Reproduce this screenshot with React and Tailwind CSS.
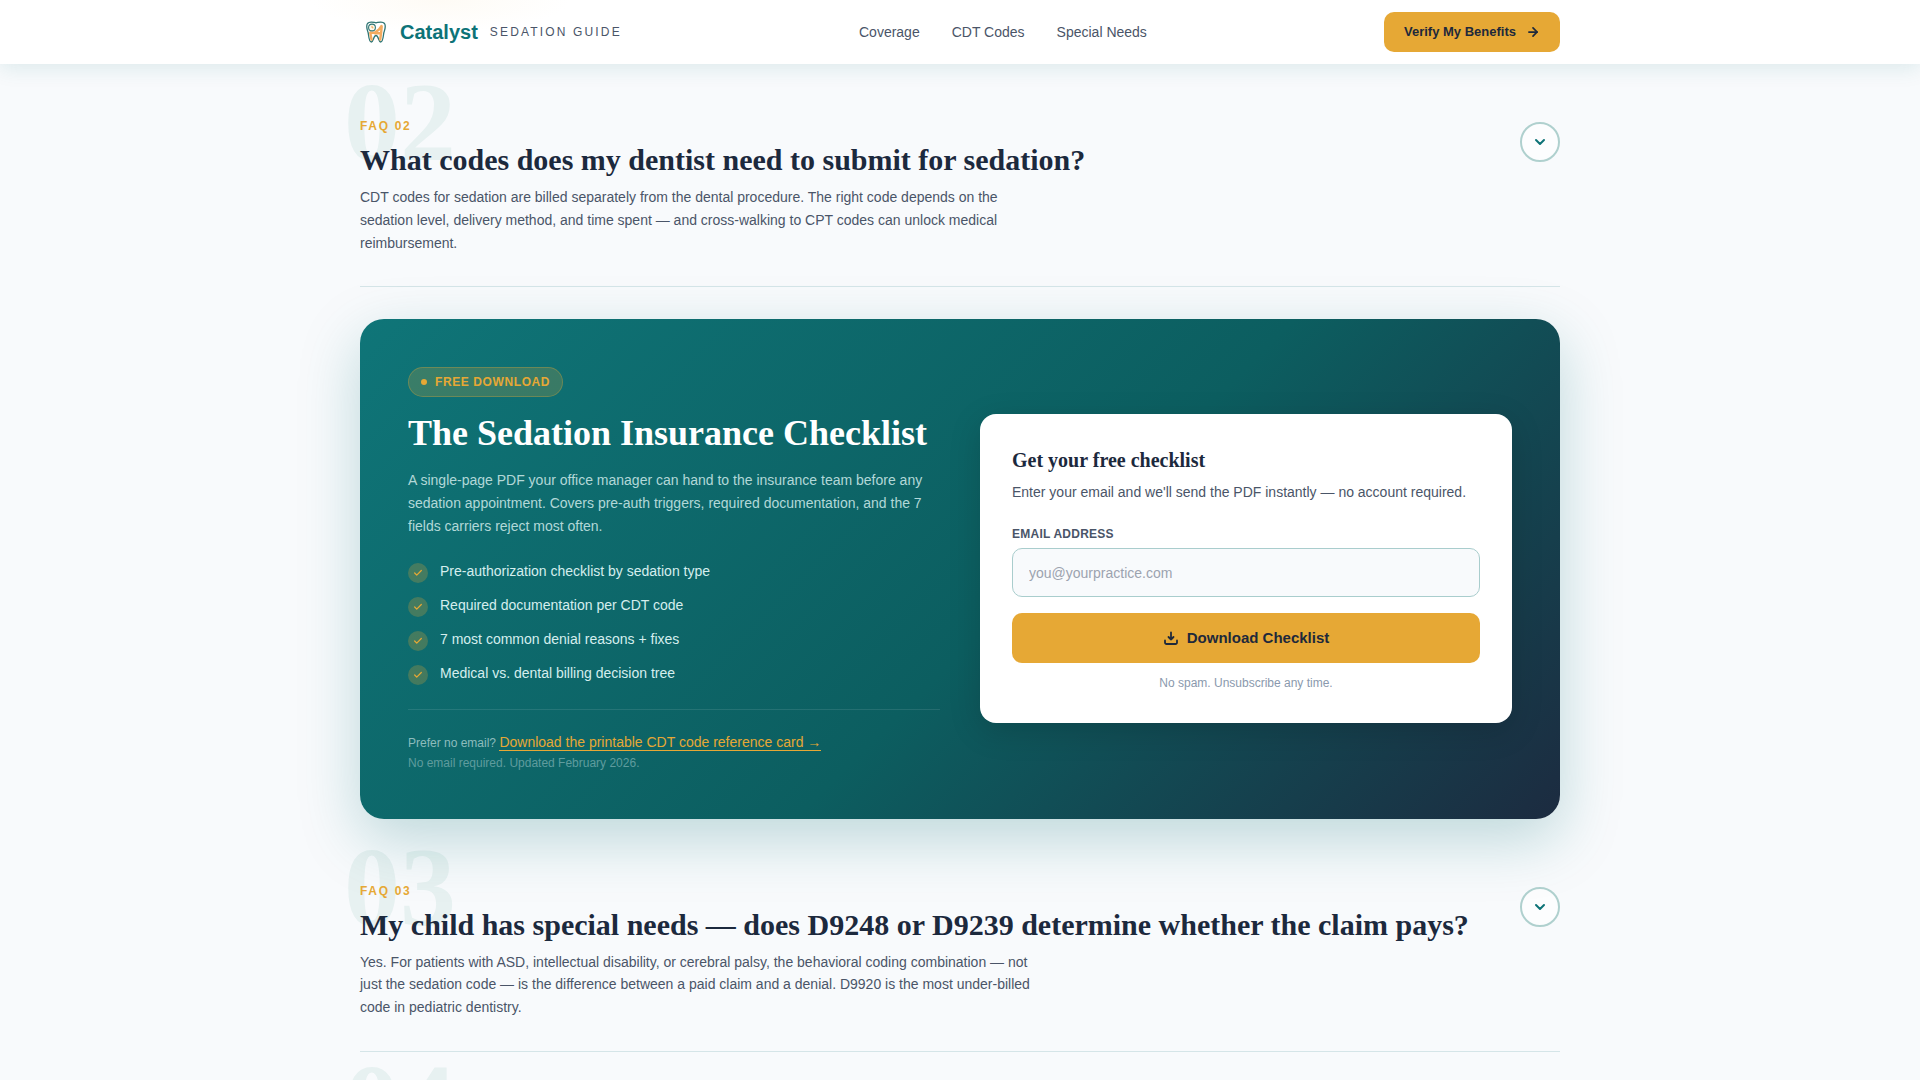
import React from "react";
import { useState } from "react";
import { ArrowRight, Check, ChevronDown } from "lucide-react";

const navLinks = [
  { label: "Coverage", href: "#coverage" },
  { label: "CDT Codes", href: "#cdt-codes" },
  { label: "Special Needs", href: "#special-needs" },
];

const checklistItems = [
  "Pre-authorization checklist by sedation type",
  "Required documentation per CDT code",
  "7 most common denial reasons + fixes",
  "Medical vs. dental billing decision tree",
];

const ToothLogo = () => (
  <svg viewBox="0 0 32 32" className="size-8" fill="none" aria-hidden="true">
    <path
      d="M7.500 7.500C9.500 4.800 13 6.300 16 6.800c3-.5 6.500-2 8.500.7 1.800 2.800.4 6-.6 9-.6 2-.6 9.500-3.200 9.500-2.300 0-2-6.500-4.700-6.500S13.600 26 11.300 26C8.700 26 8.700 18.500 8.100 16.500c-1-3-2.400-6.200-.6-9z"
      fill="#fff"
      stroke="#2f7573"
      strokeWidth="1.300"
      strokeLinejoin="round"
    />
    <path
      d="M10.300 16.500c.4 2.500.6 5 1.300 7M21.700 10.500l-.5 5.500-1 7.500M10.500 17l4.500-.5 4-3 2.500-3.500M15 17.200h5"
      stroke="#f3ab5f"
      strokeWidth="2.400"
      strokeLinecap="round"
      strokeLinejoin="round"
    />
    <circle cx="12" cy="11.500" r="3.400" fill="#fff8ea" stroke="#2f7573" strokeWidth="1.100" />
    <path d="M12 9.800v2h1.400" stroke="#f0a650" strokeWidth="1" />
  </svg>
);

const DownloadIcon = () => (
  <svg
    viewBox="0 0 16 16"
    className="size-4"
    fill="none"
    stroke="currentColor"
    strokeWidth="1.800"
    strokeLinecap="round"
    strokeLinejoin="round"
    aria-hidden="true"
  >
    <path d="M8 2.500v7M5.500 7L8 9.500 10.500 7M2 10.500v2A1.500 1.500 0 0 0 3.500 14h9a1.500 1.500 0 0 0 1.500-1.500v-2" />
  </svg>
);

const Header = () => (
  <header className="relative z-20 bg-white bg-[radial-gradient(ellipse_130px_32px_at_440px_0px,#fefbf5,transparent)] shadow-[0_4px_20px_rgba(13,115,119,0.12)]">
    <div className="mx-auto flex h-16 max-w-[1200px] items-center justify-between">
      <a href="#top" className="flex items-center gap-3">
        <span className="flex items-center gap-2">
          <ToothLogo />
          <span className="text-xl font-bold text-[#0d7377]">Catalyst</span>
        </span>
        <span className="text-xs tracking-[0.18em] text-[#4a5568]">
          SEDATION GUIDE
        </span>
      </a>
      <nav className="flex gap-8">
        {navLinks.map((link) => (
          <a key={link.label} href={link.href} className="text-sm text-[#4a5568]">
            {link.label}
          </a>
        ))}
      </nav>
      <button
        type="button"
        className="flex h-10 items-center gap-2.5 rounded-[10px] bg-[#e6a835] px-5 text-[13px] font-bold text-[#1e293b]"
      >
        Verify My Benefits
        <ArrowRight size={14} strokeWidth={3} />
      </button>
    </div>
  </header>
);

const FaqNumber = ({ number }) => (
  <span
    aria-hidden="true"
    className="pointer-events-none absolute -top-1 -left-4 font-['Liberation_Serif',serif] text-[112px] leading-none font-bold text-[#128068]/7 select-none"
  >
    {number}
  </span>
);

const FaqItem = ({ number, question, children }) => {
  const [isOpen, setIsOpen] = useState(false);

  return (
    <article className="relative border-b border-[#0d7377]/15 pt-12 pb-8">
      <FaqNumber number={number} />
      <div className="relative flex items-start justify-between gap-6">
        <div>
          <p className="text-xs font-bold tracking-[0.14em] text-[#e6a835]">
            FAQ {number}
          </p>
          <h2 className="mt-1.5 font-['Liberation_Serif',serif] text-3xl leading-10 font-bold text-[#1c293d]">
            {question}
          </h2>
          <p className="mt-1.5 max-w-2xl text-sm leading-relaxed text-[#4a5568]">
            {children}
          </p>
        </div>
        <button
          type="button"
          aria-label={`Toggle answer ${number}`}
          aria-expanded={isOpen}
          onClick={() => setIsOpen(!isOpen)}
          className="mt-1 flex size-10 shrink-0 items-center justify-center rounded-full border-2 border-[#afd0ce] bg-white/50 text-[#0d7377]"
        >
          <ChevronDown size={16} strokeWidth={3} />
        </button>
      </div>
    </article>
  );
};

const DownloadForm = () => {
  const [email, setEmail] = useState("");

  return (
    <form
      onSubmit={(e) => e.preventDefault()}
      className="rounded-2xl bg-white p-8 shadow-[0_8px_32px_rgba(0,0,0,0.15)]"
    >
      <h3 className="font-['Liberation_Serif',serif] text-xl leading-7 font-bold text-[#1c293d]">
        Get your free checklist
      </h3>
      <p className="mt-1.5 text-sm leading-6 text-[#4a5568]">
        Enter your email and we'll send the PDF instantly — no account required.
      </p>
      <label
        htmlFor="email"
        className="mt-[22px] block text-xs font-bold tracking-[0.02em] text-[#4a5568]"
      >
        EMAIL ADDRESS
      </label>
      <input
        id="email"
        type="email"
        value={email}
        onChange={(e) => setEmail(e.target.value)}
        placeholder="you@yourpractice.com"
        className="mt-1.5 h-[49px] w-full rounded-[10px] border border-[#a9cdcd] bg-[#f8fafc] px-4 text-sm text-[#1e293b] placeholder:text-[#9ca3af]"
      />
      <button
        type="submit"
        className="mt-4 flex h-[50px] w-full items-center justify-center gap-2 rounded-[10px] bg-[#e6a835] text-[15px] font-bold text-[#1e293b]"
      >
        <DownloadIcon />
        Download Checklist
      </button>
      <p className="mt-3 text-center text-xs text-[#8a99ad]">
        No spam. Unsubscribe any time.
      </p>
    </form>
  );
};

const ChecklistCard = () => (
  <section className="relative mt-8 mb-4 grid grid-cols-2 items-center gap-10 rounded-3xl bg-[linear-gradient(135deg,#0f7578_0%,#0c5e60_55%,#1c2b40_100%)] p-12 shadow-[0_20px_60px_rgba(13,115,119,0.25)]">
    <div>
      <p className="inline-flex items-center gap-2 rounded-full border border-[#e6a835]/30 bg-[#e6a835]/20 px-3 py-1.5 text-xs font-bold tracking-wider text-[#e6a835]">
        <span className="size-1.5 rounded-full bg-[#e6a835]" />
        FREE DOWNLOAD
      </p>
      <h2 className="mt-4 font-['Liberation_Serif',serif] text-4xl leading-10 font-bold text-white">
        The Sedation Insurance Checklist
      </h2>
      <p className="mt-4 text-sm leading-relaxed text-[#b2d8d8]">
        A single-page PDF your office manager can hand to the insurance team
        before any sedation appointment. Covers pre-auth triggers, required
        documentation, and the 7 fields carriers reject most often.
      </p>
      <ul className="mt-[22px] flex flex-col gap-3">
        {checklistItems.map((item) => (
          <li key={item} className="flex items-start gap-3 text-sm leading-[22px] text-[#d5eeee]">
            <span className="mt-[3px] -mb-1 flex size-5 shrink-0 items-center justify-center rounded-full bg-[#e6a835]/25 text-[#e6a835]">
              <Check size={10} strokeWidth={3} />
            </span>
            {item}
          </li>
        ))}
      </ul>
      <div className="mt-[25px] border-t border-white/10 pt-[22px] text-xs text-[#8dbcbd]">
        <p className="leading-5">
          Prefer no email?{" "}
          <a
            href="#reference-card"
            className="border-b border-[#e6a835] text-sm leading-5 text-[#e6a835]"
          >
            Download the printable CDT code reference card →
          </a>
        </p>
        <p className="mt-0.5 text-[#5f9c9e]">
          No email required. Updated February 2026.
        </p>
      </div>
    </div>
    <DownloadForm />
  </section>
);

const App = () => {
  return (
    <div
      id="top"
      className="min-h-screen overflow-hidden bg-[#f8fafc] font-['Liberation_Sans',Arial,sans-serif]"
    >
      <Header />
      <main className="mx-auto max-w-[1200px] pt-1.5">
        <FaqItem
          number="02"
          question="What codes does my dentist need to submit for sedation?"
        >
          CDT codes for sedation are billed separately from the dental
          procedure. The right code depends on the sedation level, delivery
          method, and time spent — and cross-walking to CPT codes can unlock
          medical reimbursement.
        </FaqItem>

        <ChecklistCard />

        <FaqItem
          number="03"
          question="My child has special needs — does D9248 or D9239 determine whether the claim pays?"
        >
          Yes. For patients with ASD, intellectual disability, or cerebral
          palsy, the behavioral coding combination — not just the sedation code
          — is the difference between a paid claim and a denial. D9920 is the
          most under-billed code in pediatric dentistry.
        </FaqItem>

        <article className="relative pt-7">
          <FaqNumber number="04" />
        </article>
      </main>
    </div>
  );
};

export default App;
